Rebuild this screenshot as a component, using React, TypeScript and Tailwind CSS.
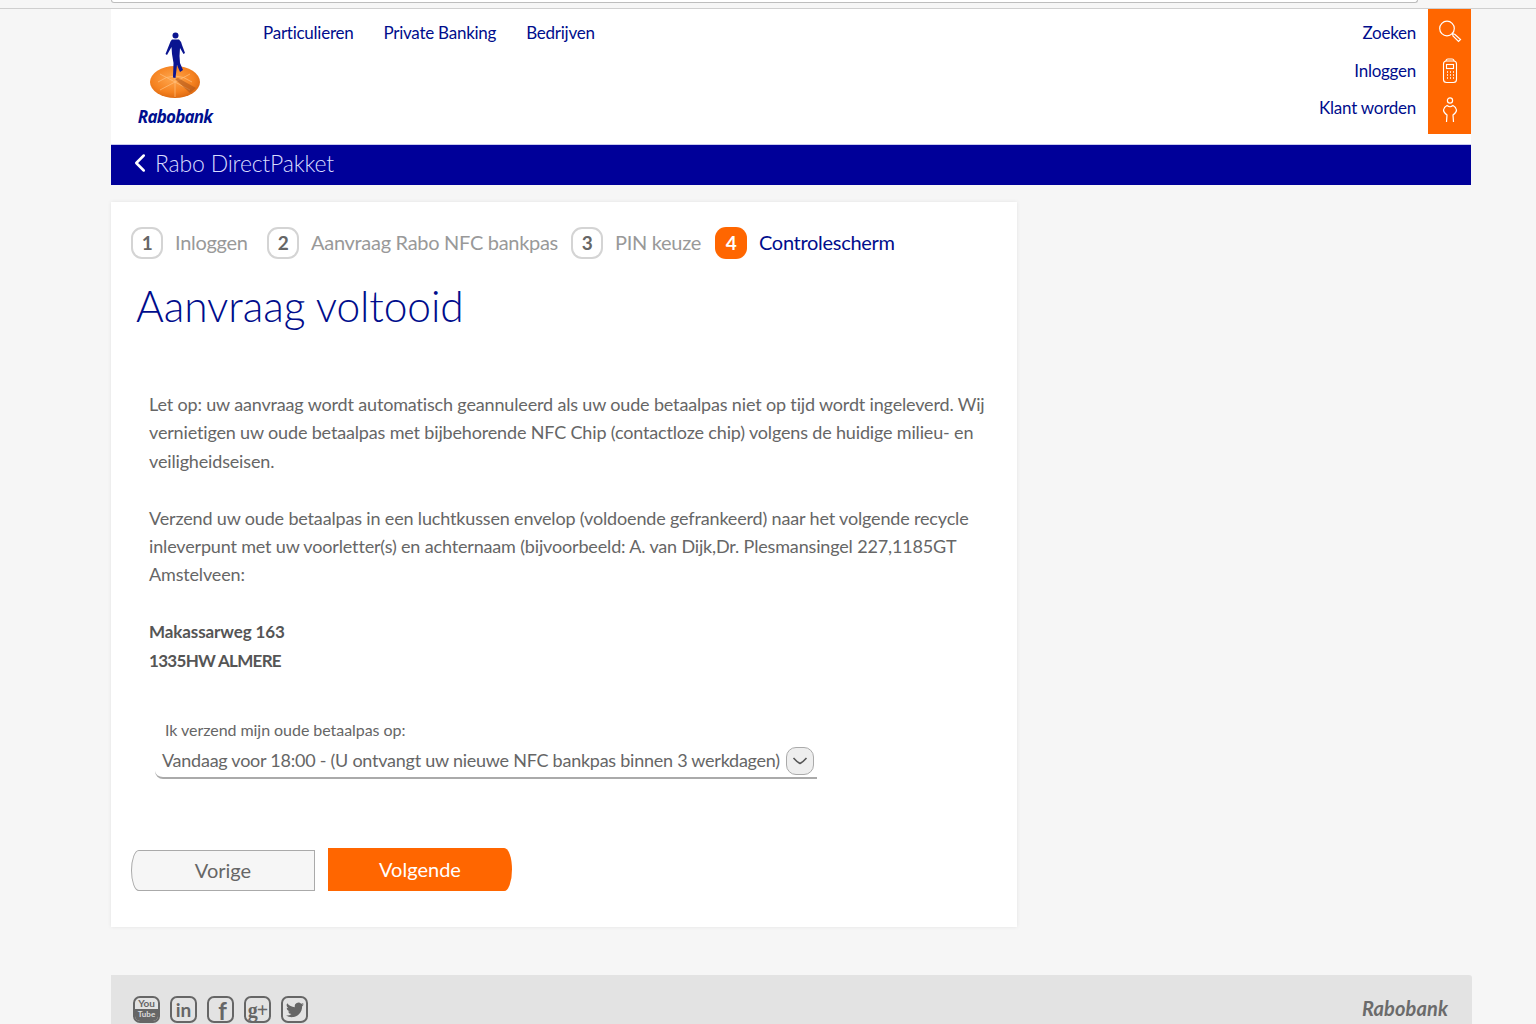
import { ChevronLeft } from "lucide-react";

function RaboLogo() {
  return (
    <div className="flex w-[80px] flex-col items-center">
      <svg width="54" height="70" viewBox="0 0 54 70">
        <defs>
          <radialGradient id="disc" cx="45%" cy="40%" r="65%">
            <stop offset="0%" stopColor="#ffa64d" />
            <stop offset="65%" stopColor="#f58220" />
            <stop offset="100%" stopColor="#d9650f" />
          </radialGradient>
        </defs>
        <ellipse cx="27" cy="50" rx="25" ry="16" fill="url(#disc)" />
        <path d="M10 50 Q27 38 44 50 M27 35 V65 M12 42 L42 58 M42 42 L12 58" stroke="#ffc27f" strokeWidth="0.7" fill="none" />
        <path d="M30 46 L48 56 L42 61 L27 47 Z" fill="#a9521a" opacity="0.55" />
        <circle cx="27.500" cy="3.500" r="3" fill="#0a1490" />
        <path d="M24 7.500 L31 7.500 Q33 9 34 13 L37 21 L35.500 22 L32 16 L31.500 24 L32 31 L35 38 L32 40 L29 33 L27.500 46 L25 45.500 L25.500 31 L24 22 L23.500 15 L19 23 L17.500 22 L21.500 12 Q22.500 8.500 24 7.500 Z" fill="#0a1490" />
      </svg>
      <span className="mt-[5px] font-['Open_Sans',sans-serif] text-[17px] leading-[20px] font-bold tracking-[-0.8px] text-[#000f8f] italic">
        Rabobank
      </span>
    </div>
  );
}

function SearchIcon() {
  return (
    <svg width="24" height="24" viewBox="0 0 24 24" fill="none" stroke="white" strokeWidth="1.200">
      <circle cx="9" cy="9.500" r="7.300" />
      <path d="M14.500 14.500 L17 15.500 L22.500 20.500 L20.500 22.500 L15 17 Z" />
    </svg>
  );
}

function ReaderIcon() {
  return (
    <svg width="16" height="26" viewBox="0 0 16 26" fill="none" stroke="white" strokeWidth="1.100">
      <path d="M4 3 Q4 1 6 1 H10 Q12 1 12 3" />
      <rect x="1.500" y="3" width="13" height="21.500" rx="3" />
      <rect x="4.500" y="6.500" width="7" height="4" />
      <path d="M5 14 H6 M8 14 H9 M11 14 H12 M5 17 H6 M8 17 H9 M11 17 H12 M5 20 H6 M8 20 H9 M11 20 H12" strokeWidth="1.300" />
    </svg>
  );
}

function PersonIcon() {
  return (
    <svg width="16" height="26" viewBox="0 0 16 26" fill="none" stroke="white" strokeWidth="1.200">
      <circle cx="8" cy="3.500" r="2.600" />
      <path d="M4.500 25 L5 18 Q1.500 15.500 1.500 13 Q2 10 5 8.500 Q8 11 11 8.500 Q14 10 14.500 13 Q14.500 15.500 11 18 L11.500 25" />
    </svg>
  );
}

function Step({ n, label, width, active }: { n: number; label: string; width: string; active?: boolean }) {
  return (
    <div className="flex items-center gap-[12px]">
      <div
        className={
          active
            ? "flex h-[32px] w-[32px] items-center justify-center rounded-[11px] bg-[#ff6600] text-[19px] font-bold text-white"
            : "flex h-[32px] w-[32px] items-center justify-center rounded-[11px] border-2 border-[#d4d4d4] text-[19px] font-bold text-[#666666]"
        }
      >
        {n}
      </div>
      <span className={`whitespace-nowrap pb-[2px] leading-[30px] ${width} ${active ? "text-[#000d8c]" : "text-[#999999]"}`}>{label}</span>
    </div>
  );
}

function Social({ children }: { children: React.ReactNode }) {
  return (
    <div className="flex h-[27px] w-[27px] items-center justify-center overflow-hidden rounded-[7px] border-[2.500px] border-[#666666] text-[#666666]">
      {children}
    </div>
  );
}

export default function App() {
  return (
    <div className="h-[1024px] w-[1536px] overflow-hidden bg-[#f6f6f6] font-['Lato',sans-serif]">
      {/* browser strip */}
      <div className="h-[9px] border-b border-[#cfcfcf] bg-[#f6f6f6] pl-[111px]">
        <div className="h-[3px] w-[1307px] rounded-b-[3px] border-x border-b border-[#bdbdbd] bg-white" />
      </div>

      <div className="ml-[111px] w-[1360px]">
        <header className="flex h-[135px] bg-white">
          <div className="pt-[23px] pl-[24px]">
            <RaboLogo />
          </div>
          <nav className="ml-[48px] flex gap-[30px] pt-[12px] text-[17px] leading-[24px] tracking-[-0.25px] text-[#000d8c]">
            <a>Particulieren</a>
            <a>Private Banking</a>
            <a>Bedrijven</a>
          </nav>
          <div className="ml-auto flex items-start">
            <div className="mr-[12px] flex flex-col items-end pt-[12px] text-[17px] leading-[24px] tracking-[-0.25px] text-[#000d8c]">
              <a>Zoeken</a>
              <a className="mt-[14px]">Inloggen</a>
              <a className="mt-[13px]">Klant worden</a>
            </div>
            <div className="flex h-[125px] w-[43px] flex-col items-center bg-[#ff6600] pt-[10px]">
              <SearchIcon />
              <div className="mt-[15px]">
                <ReaderIcon />
              </div>
              <div className="mt-[13px]">
                <PersonIcon />
              </div>
            </div>
          </div>
        </header>

        <div className="flex h-[41px] items-center border-t border-[#c9c9ee] bg-[#000099] pb-[4px] pl-[14px] text-[23px] font-light tracking-[-0.2px] text-[#d8dcff]">
          <ChevronLeft size={30} strokeWidth={2} className="text-white" />
          <span>Rabo DirectPakket</span>
        </div>

        <main className="mt-[17px] h-[725px] w-[906px] bg-white pt-[25px] shadow-[0_0_4px_rgba(0,0,0,0.08)]">
          <div className="flex gap-[15px] pl-[20px] text-[20px] leading-[32px] tracking-[-0.3px]">
            <Step n={1} label="Inloggen" width="w-[77px]" />
            <Step n={2} label="Aanvraag Rabo NFC bankpas" width="w-[245px]" />
            <Step n={3} label="PIN keuze" width="w-[85px]" />
            <Step n={4} label="Controlescherm" width="w-[137px]" active />
          </div>

          <h1 className="mt-[19px] pl-[25px] text-[42.500px] leading-[56px] font-light tracking-[-0.1px] text-[#000d8c]">
            Aanvraag voltooid
          </h1>

          <div className="mt-[56px] pl-[38px] text-[18px] leading-[28.400px] tracking-[-0.16px] text-[#666666]">
            <p>
              Let op: uw aanvraag wordt automatisch geannuleerd als uw oude betaalpas niet op tijd wordt ingeleverd. Wij
              <br />
              vernietigen uw oude betaalpas met bijbehorende NFC Chip (contactloze chip) volgens de huidige milieu- en
              <br />
              veiligheidseisen.
            </p>
            <p className="mt-[28.400px]">
              Verzend uw oude betaalpas in een luchtkussen envelop (voldoende gefrankeerd) naar het volgende recycle
              <br />
              inleverpunt met uw voorletter(s) en achternaam (bijvoorbeeld: A. van Dijk,Dr. Plesmansingel 227,1185GT
              <br />
              Amstelveen:
            </p>
            <p className="mt-[29.400px] text-[17px] font-bold tracking-[-0.1px] text-[#555555]">
              Makassarweg 163
              <br />
              <span className="tracking-[-0.7px]">1335HW ALMERE</span>
            </p>
          </div>

          <div className="mt-[45px] ml-[44px] w-[662px]">
            <div className="pl-[10px] text-[16px] leading-[20px] tracking-[-0.05px] text-[#666666]">
              Ik verzend mijn oude betaalpas op:
            </div>
            <div className="mt-[5px] flex h-[34px] items-center rounded-bl-[8px] border-b-2 border-[#aaaaaa] pb-[1px] pl-[7px] text-[18px] tracking-[-0.25px] whitespace-nowrap text-[#666666]">
              <span>Vandaag voor 18:00 - (U ontvangt uw nieuwe NFC bankpas binnen 3 werkdagen)</span>
              <div className="mr-[3px] ml-auto flex h-[28px] w-[28px] shrink-0 items-center justify-center rounded-[10px] border border-[#aaaaaa] bg-[#eeeeee]">
                <svg width="16" height="10" viewBox="0 0 16 10" fill="none" stroke="#555555" strokeWidth="1.500">
                  <path d="M1.500 2 Q5 6 8 7.500 Q11 6 14.500 2" />
                </svg>
              </div>
            </div>
          </div>

          <div className="mt-[69px] ml-[20px] flex items-end gap-[13px] text-[20px]">
            <button className="h-[41px] w-[184px] rounded-tl-[8px_21px] rounded-bl-[8px_21px] border border-[#aaaaaa] bg-[#f6f6f6] pb-[2px] text-[#666666]">
              Vorige
            </button>
            <button className="h-[43px] w-[184px] rounded-tr-[8px_22px] rounded-br-[8px_22px] bg-[#ff6600] pb-[2px] text-white">
              Volgende
            </button>
          </div>
        </main>

        <footer className="mt-[48px] flex h-[49px] w-[1361px] justify-between overflow-hidden rounded-tr-[3px] bg-[#e3e3e3] pt-[21px] pr-[24px] pl-[22px]">
          <div className="flex h-[28px] gap-[10px]">
            <Social>
              <div className="flex h-full w-full flex-col items-center text-[10px] leading-[11px] font-bold">
                <span className="h-[11px]">You</span>
                <span className="h-[12px] w-full bg-[#666666] text-center text-[8px] text-[#dddddd]">Tube</span>
              </div>
            </Social>
            <Social>
              <span className="text-[19px] leading-none font-bold">in</span>
            </Social>
            <Social>
              <span className="mt-[3px] ml-[4px] text-[24px] leading-none font-bold">f</span>
            </Social>
            <Social>
              <span className="font-['Liberation_Serif',serif] text-[20px] leading-none font-bold tracking-[-1px]">g+</span>
            </Social>
            <Social>
              <svg width="18" height="16" viewBox="0 0 24 20" fill="#666666">
                <path d="M24 2.400a10 10 0 0 1-2.800.8A5 5 0 0 0 23.300.500a10 10 0 0 1-3.100 1.200 4.900 4.900 0 0 0-8.400 4.500A14 14 0 0 1 1.700.900a4.900 4.900 0 0 0 1.500 6.600 5 5 0 0 1-2.200-.6 4.900 4.900 0 0 0 3.900 4.900 5 5 0 0 1-2.200.1 4.900 4.900 0 0 0 4.600 3.400A10 10 0 0 1 0 17.300 14 14 0 0 0 7.500 19.500c9 0 14-7.500 14-14v-.6A10 10 0 0 0 24 2.400z" />
              </svg>
            </Social>
          </div>
          <span className="text-[20px] leading-[24px] font-bold tracking-[0.1px] text-[#6b6b6b] italic">Rabobank</span>
        </footer>
      </div>
    </div>
  );
}
